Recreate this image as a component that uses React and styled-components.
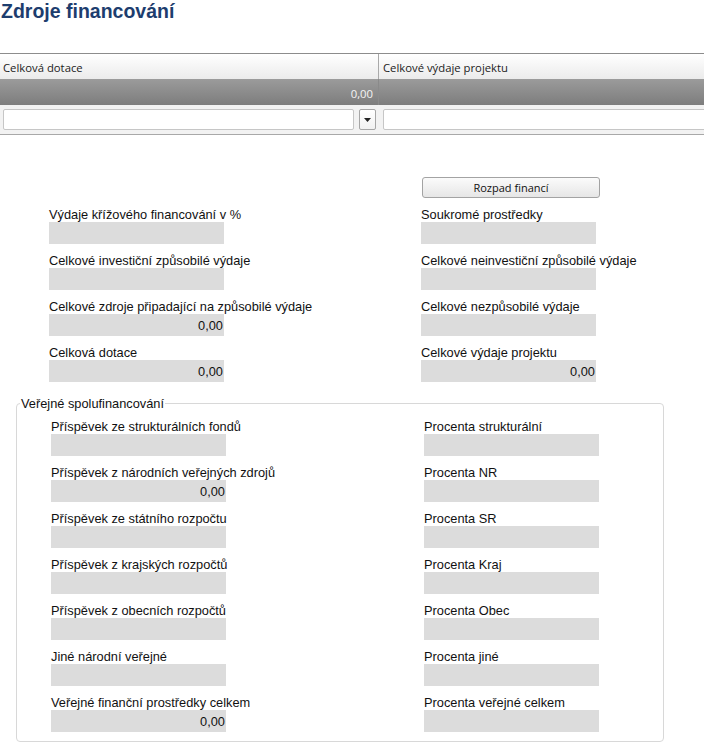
import React from "react";
import styled, { createGlobalStyle } from "styled-components";

const Global = createGlobalStyle`
  html, body { margin: 0; padding: 0; background: #ffffff; }
  body { font-family: "Liberation Sans", Arial, sans-serif; color: #000; }
`;

const Page = styled.div`
  width: 704px;
  height: 752px;
  overflow: hidden;
  position: relative;
`;

const Title = styled.h1`
  margin: 0;
  padding: 1px 0 0 1px;
  height: 53px;
  box-sizing: border-box;
  font-family: "Liberation Sans", Arial, sans-serif;
  font-weight: bold;
  font-size: 19.5px;
  line-height: 21px;
  color: #1d3d6e;
`;

const Grid = styled.div`
  width: 800px;
  border-top: 1px solid #8c8c8c;
  border-bottom: 1px solid #a8a8a8;
  font-family: "Open Sans", "Noto Sans", sans-serif;
  font-size: 11.3px;
`;

const GridRow = styled.div`
  display: grid;
  grid-template-columns: 379px 1fr;
  height: ${(p) => p.$h}px;
  background: ${(p) => p.$bg};
`;

const HeadCell = styled.div`
  display: flex;
  align-items: center;
  padding-left: ${(p) => (p.$first ? 3 : 4)}px;
  padding-top: 2px;
  border-right: ${(p) => (p.$first ? "1px solid #a9a9a9" : "none")};
  color: #222;
`;

const TotalCell = styled.div`
  display: flex;
  align-items: center;
  justify-content: flex-end;
  padding-right: 5px;
  padding-top: 2px;
  color: #f4f4f4;
  border-right: ${(p) => (p.$first ? "1px solid #8a8a8a" : "none")};
`;

const FilterCell = styled.div`
  display: flex;
  align-items: center;
  gap: 5px;
  padding: 0 ${(p) => (p.$first ? 3 : 0)}px 0 ${(p) => (p.$first ? 3 : 4)}px;
`;

const FilterInput = styled.div`
  flex: 1;
  height: 21px;
  box-sizing: border-box;
  background: #fff;
  border: 1px solid #c6c6c6;
  border-radius: 2px;
`;

const DropButton = styled.div`
  width: 17px;
  height: 21px;
  box-sizing: border-box;
  background: linear-gradient(#ffffff, #f1f1f1);
  border: 1px solid #a6a6a6;
  border-radius: 2px;
  display: flex;
  align-items: center;
  justify-content: center;
`;

const Form = styled.div`
  padding-top: 42px;
  font-family: "Liberation Sans", Arial, sans-serif;
  font-size: 12.8px;
`;

const FieldGrid = styled.div`
  display: grid;
  grid-template-columns: ${(p) => p.$col}px 175px;
  padding-left: ${(p) => p.$left}px;
`;

const Field = styled.div`
  display: flex;
  flex-direction: column;
`;

const Label = styled.div`
  height: 24px;
  box-sizing: border-box;
  padding-bottom: 0;
  display: flex;
  align-items: flex-end;
  line-height: 15px;
  white-space: nowrap;
  color: #111;
`;

const Value = styled.div`
  width: 175px;
  height: 22px;
  background: #dcdcdc;
  text-align: right;
  line-height: 23px;
  padding-right: 1px;
  box-sizing: border-box;
  color: #111;
`;

const ButtonCell = styled.div`
  grid-column: 2;
  height: 21px;
`;

const Button = styled.div`
  width: 178px;
  height: 21px;
  margin-left: 1px;
  box-sizing: border-box;
  border: 1px solid #a3a3a3;
  border-radius: 3px;
  background: linear-gradient(#fbfbfb, #e6e6e6);
  font-family: "Open Sans", "Noto Sans", sans-serif;
  font-size: 11px;
  display: flex;
  align-items: center;
  justify-content: center;
  color: #111;
`;

const Fieldset = styled.fieldset`
  margin: 15px 0 0 16px;
  width: 648px;
  box-sizing: border-box;
  padding: 0 0 9px 0;
  border: 1px solid #d8d8d8;
  border-radius: 4px;
`;

const Legend = styled.legend`
  margin-left: 3px;
  padding: 0 1px;
  font-size: 12.8px;
  line-height: 13px;
  color: #111;
`;

const left = [
  ["Výdaje křížového financování v %", ""],
  ["Celkové investiční způsobilé výdaje", ""],
  ["Celkové zdroje připadající na způsobilé výdaje", "0,00"],
  ["Celková dotace", "0,00"],
];
const right = [
  ["Soukromé prostředky", ""],
  ["Celkové neinvestiční způsobilé výdaje", ""],
  ["Celkové nezpůsobilé výdaje", ""],
  ["Celkové výdaje projektu", "0,00"],
];
const pubLeft = [
  ["Příspěvek ze strukturálních fondů", ""],
  ["Příspěvek z národních veřejných zdrojů", "0,00"],
  ["Příspěvek ze státního rozpočtu", ""],
  ["Příspěvek z krajských rozpočtů", ""],
  ["Příspěvek z obecních rozpočtů", ""],
  ["Jiné národní veřejné", ""],
  ["Veřejné finanční prostředky celkem", "0,00"],
];
const pubRight = [
  ["Procenta strukturální", ""],
  ["Procenta NR", ""],
  ["Procenta SR", ""],
  ["Procenta Kraj", ""],
  ["Procenta Obec", ""],
  ["Procenta jiné", ""],
  ["Procenta veřejné celkem", ""],
];

function Pairs({ a, b }) {
  return a.map((l, i) => (
    <React.Fragment key={i}>
      <Field>
        <Label>{l[0]}</Label>
        <Value>{l[1]}</Value>
      </Field>
      <Field>
        <Label>{b[i][0]}</Label>
        <Value>{b[i][1]}</Value>
      </Field>
    </React.Fragment>
  ));
}

export default function App() {
  return (
    <Page>
      <Global />
      <Title>Zdroje financování</Title>
      <Grid>
        <GridRow $h={25} $bg="linear-gradient(#ffffff, #ebebeb)">
          <HeadCell $first>Celková dotace</HeadCell>
          <HeadCell>Celkové výdaje projektu</HeadCell>
        </GridRow>
        <GridRow $h={26} $bg="linear-gradient(#9b9b9b, #7d7d7d)">
          <TotalCell $first>0,00</TotalCell>
          <TotalCell />
        </GridRow>
        <GridRow $h={29} $bg="#f2f2f2">
          <FilterCell $first>
            <FilterInput />
            <DropButton>
              <svg width="7" height="4" viewBox="0 0 7 4">
                <path d="M0 0h7L3.5 4z" fill="#222" />
              </svg>
            </DropButton>
          </FilterCell>
          <FilterCell>
            <FilterInput />
          </FilterCell>
        </GridRow>
      </Grid>
      <Form>
        <FieldGrid $col={372} $left={49}>
          <ButtonCell>
            <Button>Rozpad financí</Button>
          </ButtonCell>
          <Pairs a={left} b={right} />
        </FieldGrid>
        <Fieldset>
          <Legend>Veřejné spolufinancování</Legend>
          <FieldGrid $col={373} $left={34}>
            <Pairs a={pubLeft} b={pubRight} />
          </FieldGrid>
        </Fieldset>
      </Form>
    </Page>
  );
}
